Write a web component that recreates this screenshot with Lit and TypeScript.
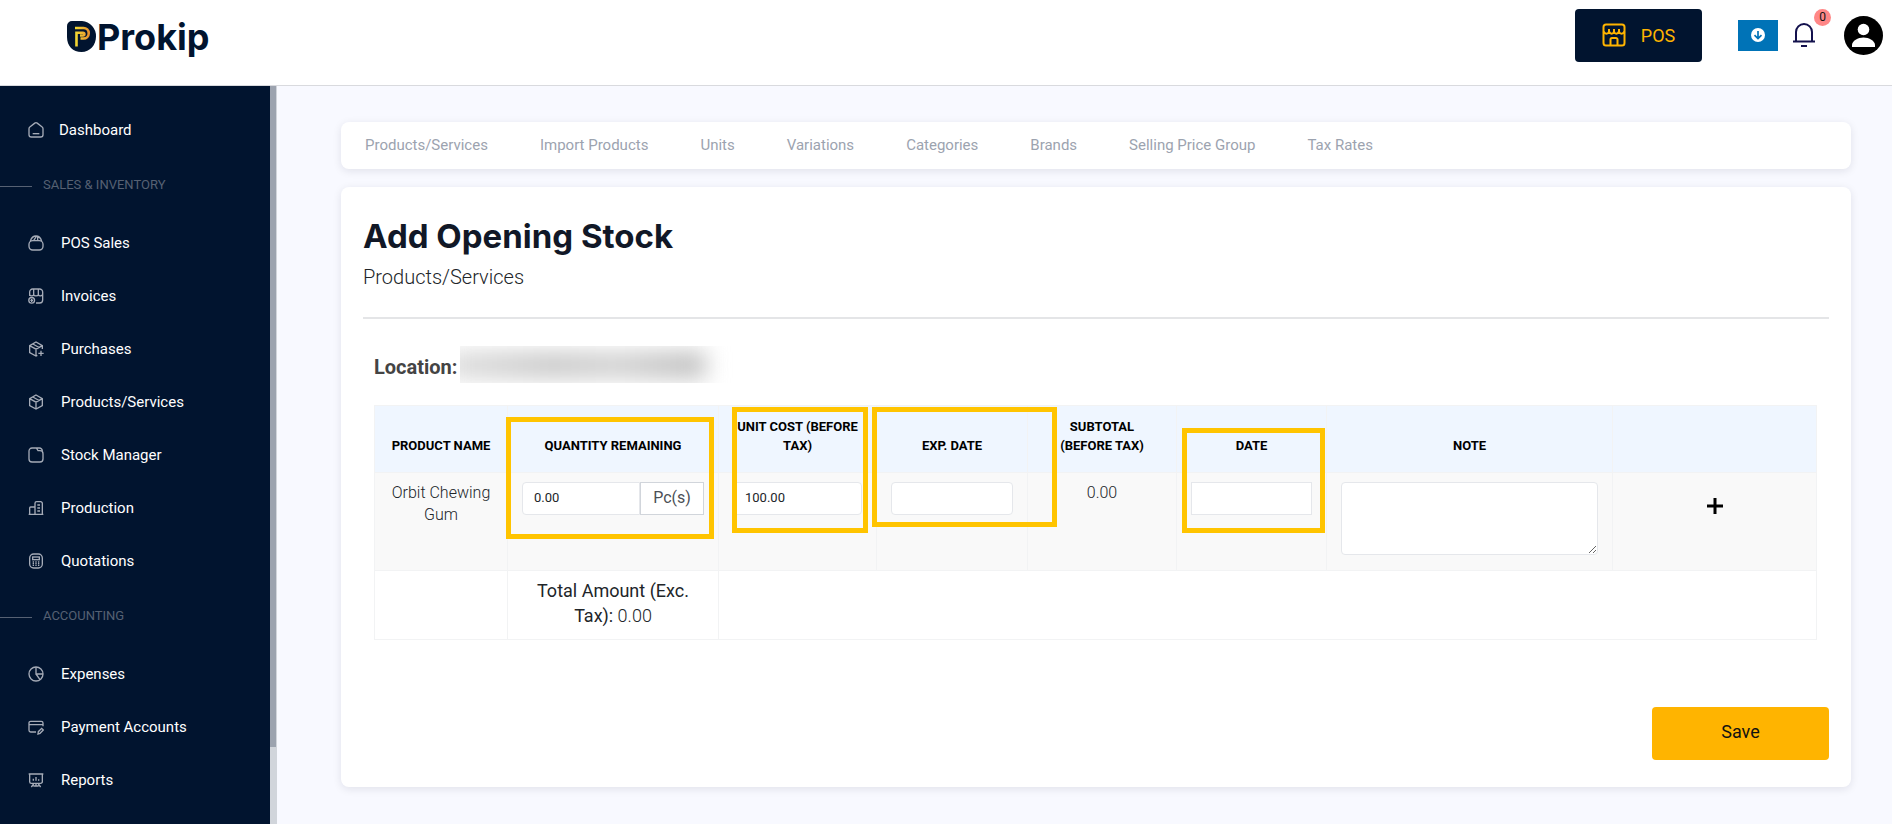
import { LitElement, html, css, svg, TemplateResult } from "lit";
import { customElement, property, state } from "lit/decorators.js";

const icons: Record<string, TemplateResult> = {
  home: svg`<path d="M1.500 10v9a3.500 3.500 0 0 0 3.500 3.500h14a3.500 3.500 0 0 0 3.500-3.500v-9a3 3 0 0 0-1.200-2.400L13.800 1.700a3 3 0 0 0-3.600 0L2.700 7.600A3 3 0 0 0 1.500 10z"/><path d="M7 17.500h10"/>`,
  bag: svg`<rect x="1.500" y="8.500" width="21" height="14" rx="5.500"/><path d="M3.500 9C5 4.500 8.500 1.500 12 1.500S19 4.500 20.500 9M8.500 8.500l4-6.500M14.500 8.500V2"/>`,
  shop: svg`<path d="M2.500 12V6A4.500 4.500 0 0 1 7 1.500h10A4.500 4.500 0 0 1 22 6v12a4.500 4.500 0 0 1-4.500 4.500H12M8.500 1.500V10M15.500 1.500V10M2.500 10c1 2.500 5 2.500 6 0 1 2.500 6 2.500 7 0 1 2.500 5 2.500 6 0"/><circle cx="5.500" cy="18.500" r="4.300"/><path d="M5.500 16v5M3.500 18.500h4"/>`,
  boxplus: svg`<path d="M21.500 12V7L12 1.500 2.500 7v10.500L12 22.500l2-1M2.500 7l9.500 5.200L21.500 7M12 12.200v10M7.200 4.500l9.500 5.300M19.500 14.500v8M15.500 18.500h8"/>`,
  box: svg`<path d="M12 1.500 21.500 7v10.500L12 22.500l-9.500-5V7zM2.500 7l9.500 5.200L21.500 7M12 12.200v10M7.200 4.500l9.500 5.300"/>`,
  folder: svg`<path d="M1.500 6a4.500 4.500 0 0 1 4.500-4.500h6.500L15 5.500h3a4.500 4.500 0 0 1 4.500 4.500v8a4.500 4.500 0 0 1-4.500 4.500H6A4.500 4.500 0 0 1 1.500 18zM12.500 1.500H17a4.500 4.500 0 0 1 4.500 5"/>`,
  building: svg`<path d="M1 21.500h22M2.500 21.500v-9.500a1.500 1.500 0 0 1 1.500-1.500h6.500M10.500 21.500V5A2.500 2.500 0 0 1 13 2.500h6A2.500 2.500 0 0 1 21.500 5v16.500M14 7.500h4M14 12h4M14 16.500h4"/>`,
  calc: svg`<rect x="2.500" y="1.500" width="19" height="21" rx="6"/><rect x="7" y="6" width="10" height="4"/><path d="M7 13.500h2M11 13.500h2M15 13.500h2M7 16h2M11 16h2M15 16h2M7 18.500h2M11 18.500h2M15 18.500h2"/>`,
  pie: svg`<circle cx="12" cy="12" r="10.500"/><path d="M12 1.500V12h10.500M12 12l6 8.500"/>`,
  card: svg`<path d="M12 19.500H4a2.500 2.500 0 0 1-2.500-2.500V6A2.500 2.500 0 0 1 4 3.500h16A2.500 2.500 0 0 1 22.500 6v5M1.500 8.500h21M15 22.500l.5-3.500 5-5 2.500 2.500-5 5z"/>`,
  board: svg`<path d="M1 3h22M2.500 3v11.500a2.500 2.500 0 0 0 2.500 2.500h14a2.500 2.500 0 0 0 2.500-2.500V3M8 10v3M12 7.500V13M16 11v2M12 17v5M8.500 18 5 22.500M15.500 18l3.500 4.500M8 21h8"/>`,
};

interface Entry { icon: string; text: string; }
interface Group { title?: string; entries: Entry[]; }

const groups: Group[] = [
  { entries: [{ icon: "home", text: "Dashboard" }] },
  {
    title: "SALES & INVENTORY",
    entries: [
      { icon: "bag", text: "POS Sales" },
      { icon: "shop", text: "Invoices" },
      { icon: "boxplus", text: "Purchases" },
      { icon: "box", text: "Products/Services" },
      { icon: "folder", text: "Stock Manager" },
      { icon: "building", text: "Production" },
      { icon: "calc", text: "Quotations" },
    ],
  },
  {
    title: "ACCOUNTING",
    entries: [
      { icon: "pie", text: "Expenses" },
      { icon: "card", text: "Payment Accounts" },
      { icon: "board", text: "Reports" },
    ],
  },
];

@customElement("top-bar")
export class TopBar extends LitElement {
  @property({ type: Number }) alerts = 0;

  static styles = css`
    :host { display: block; }
    .bar {
      display: flex; align-items: flex-start; justify-content: space-between;
      box-sizing: border-box; height: 86px; padding: 8px 9px 0 67px;
      background: #fff; border-bottom: 1px solid #d9dade;
    }
    .brand {
      display: flex; align-items: center; height: 56px;
      color: #01142f; text-decoration: none;
      font: 700 36px/44px Inter, sans-serif;
    }
    .name { padding-top: 2px; }
    .mark { width: 30px; height: 31px; }
    .tools { display: flex; align-items: center; height: 54px; }
    button { border: 0; padding: 0; background: none; font: inherit; cursor: pointer; }
    .pos {
      display: flex; align-items: center; justify-content: center; gap: 15px;
      width: 127px; height: 53px; margin-right: 36px; border-radius: 4px;
      background: #01142f; color: #ffb400; font-size: 18px;
    }
    .pos svg { width: 24px; height: 24px; }
    .load {
      display: grid; place-items: center; width: 40px; height: 31px;
      margin-right: 15px; background: #0073b7;
    }
    .bell { position: relative; width: 22px; height: 26px; margin-right: 29px; }
    .badge {
      position: absolute; left: 21px; top: -13px; width: 17px; height: 17px;
      border-radius: 50%; background: #ff8787; color: #111; font-size: 12px; line-height: 17px;
    }
    .user { width: 39px; height: 39px; }
    svg { display: block; }
  `;

  render() {
    return html`
      <header class="bar">
        <a class="brand" href="#" aria-label="Prokip">
          <svg class="mark" viewBox="0 0 30 31">
            <defs><linearGradient id="gold" gradientUnits="userSpaceOnUse" x1="8" y1="0" x2="22" y2="0"><stop offset="0" stop-color="#f2dc33" /><stop offset="1" stop-color="#e8922e" /></linearGradient></defs>
            <path d="M5 0h10a15 15 0 0 1 14 15.500C29 24 23 31 14.500 31S0 25 0 16V5a5 5 0 0 1 5-5z" fill="#01142f" />
            <path d="M8 7h8.500a5 5 0 0 1 0 10.500H13.500M9.500 25.500V11.700h6.500a1.300 1.300 0 0 1 0 2.800H13" fill="none" stroke="url(#gold)" stroke-width="2.600" />
          </svg>
          <span class="name">Prokip</span>
        </a>
        <div class="tools">
          <button class="pos">
            <svg viewBox="0 0 24 24" fill="none" stroke="currentColor" stroke-width="2">
              <rect x="1.500" y="1.500" width="21" height="21" rx="2.500" />
              <path d="M1.500 8.500c1.500 3 4.500 3 5.500 0v-2.500 2.500c1.500 3 4 3 5 0v-2.500 2.500c1 3 3.500 3 5 0v-2.500 2.500c1 3 4 3 5.500 0M8.500 22v-5.500a1.500 1.500 0 0 1 1.500-1.500h4a1.500 1.500 0 0 1 1.500 1.500V22" />
            </svg>
            POS
          </button>
          <button class="load" aria-label="Downloads">
            <svg width="14" height="14" viewBox="0 0 14 14"><circle cx="7" cy="7" r="7" fill="#fff" /><path d="M7 3v7.500M3.500 7.200 7 10.600l3.500-3.400" fill="none" stroke="#0073b7" stroke-width="1.700" /></svg>
          </button>
          <button class="bell" aria-label="Notifications">
            <svg width="22" height="26" viewBox="0 0 22 26" fill="none" stroke="#13114d" stroke-width="2"><path d="M0 19.500h22M3 19.500V10a8 8 0 0 1 16 0v9.500M8 24h6" /></svg>
            <span class="badge">${this.alerts}</span>
          </button>
          <button class="user" aria-label="Account">
            <svg viewBox="0 0 39 39"><circle cx="19.500" cy="19.500" r="19.500" /><circle cx="19.500" cy="13.500" r="5.800" fill="#fff" /><path d="M8 31v-2c0-4 6-7.500 11.500-7.500S31 25 31 29v2z" fill="#fff" /></svg>
          </button>
        </div>
      </header>
    `;
  }
}

@customElement("side-menu")
export class SideMenu extends LitElement {
  static styles = css`
    :host { display: flex; min-height: 0; background: #01142f; }
    nav { flex: 1; padding-top: 17px; overflow: hidden; }
    .entry {
      display: flex; align-items: center; gap: 17px; height: 53px; padding-left: 28px;
      color: #fff; font-size: 15px; line-height: 20px; text-decoration: none;
    }
    .top { gap: 15px; }
    svg { width: 16px; height: 16px; flex: none; fill: none; stroke: #a5abb7; stroke-width: 2; }
    h2 {
      display: flex; align-items: center; gap: 11px; height: 57px; margin: 0; padding-bottom: 3px;
      color: #566173; font-size: 13px; line-height: 18px; font-weight: 400;
    }
    h2::before { content: ""; width: 32px; height: 1px; margin-top: 3px; background: #566173; }
    .track { width: 7px; background: #d1d5db; }
    .thumb { width: 6px; height: calc(100% - 77px); background: #9ca3af; }
  `;

  render() {
    return html`
      <nav>
        ${groups.map((g) => html`
          ${g.title ? html`<h2>${g.title}</h2>` : null}
          ${g.entries.map((e) => html`
            <a class="entry ${g.title ? "" : "top"}" href="#">
              <svg viewBox="0 0 24 24">${icons[e.icon]}</svg>${e.text}
            </a>`)}
        `)}
      </nav>
      <div class="track"><div class="thumb"></div></div>
    `;
  }
}

@customElement("stock-table")
export class StockTable extends LitElement {
  @state() private quantity = "0.00";
  @state() private cost = "100.00";

  static styles = css`
    :host { display: block; position: relative; }
    table { width: 100%; table-layout: fixed; border-collapse: collapse; background: #fff; }
    th, td { border: 1px solid #f2f3f4; text-align: center; }
    th {
      height: 38px; padding: 11px 0 17px; vertical-align: bottom; background: #eff6ff;
      color: #000; font-size: 13px; line-height: 19px; font-weight: 700;
    }
    td { padding: 9px 14px; vertical-align: top; font-size: 16px; line-height: 22px; font-weight: 300; color: #212529; }
    .stock td { height: 79px; background: #f9f9f9; }
    .c1 { width: 133px; } .c2 { width: 211px; } .c3 { width: 158px; } .c4 { width: 151px; }
    .c5 { width: 149px; } .c6 { width: 150px; } .c7 { width: 286px; } .c8 { width: 204px; }
    input, textarea {
      display: block; box-sizing: border-box; width: 100%; height: 33px; padding: 0 11px 2px;
      border: 1px solid #e5e7eb; border-radius: 4px; background: #fff;
      color: #212529; font: 400 13px/20px Roboto, sans-serif;
    }
    textarea { height: 73px; resize: both; }
    .square { border-radius: 0; }
    .group { display: flex; }
    .group input { flex: 1; min-width: 0; border-radius: 4px 0 0 4px; }
    .unit {
      box-sizing: border-box; width: 64px; height: 33px; border: 1px solid #d1d5db;
      background: #fff; color: #4b4f56; font-weight: 400; line-height: 30px;
    }
    .add { margin-top: 16px; padding: 0; border: 0; background: none; cursor: pointer; }
    .add svg { display: block; }
    .total td { height: 50px; padding: 7px 14px 11px; font-size: 18px; line-height: 25px; }
    .total b { font-weight: 400; }
    .mark { position: absolute; box-sizing: border-box; border: 5px solid #ffc400; pointer-events: none; }
    .m1 { left: 132px; top: 12px; width: 208px; height: 122px; }
    .m2 { left: 358px; top: 2px; width: 136px; height: 126px; }
    .m3 { left: 498px; top: 2px; width: 185px; height: 120px; }
    .m4 { left: 808px; top: 23px; width: 143px; height: 105px; }
  `;

  render() {
    return html`
      <table>
        <colgroup>${[1, 2, 3, 4, 5, 6, 7, 8].map((n) => html`<col class="c${n}" />`)}</colgroup>
        <thead>
          <tr>
            <th>PRODUCT NAME</th>
            <th id="qty">QUANTITY REMAINING</th>
            <th id="cost">UNIT COST (BEFORE<br />TAX)</th>
            <th id="exp">EXP. DATE</th>
            <th>SUBTOTAL<br />(BEFORE TAX)</th>
            <th id="date">DATE</th>
            <th id="note">NOTE</th>
            <th></th>
          </tr>
        </thead>
        <tbody>
          <tr class="stock">
            <td>Orbit Chewing Gum</td>
            <td><div class="group"><input aria-labelledby="qty" .value=${this.quantity} /><span class="unit">Pc(s)</span></div></td>
            <td><input aria-labelledby="cost" .value=${this.cost} /></td>
            <td><input aria-labelledby="exp" /></td>
            <td>0.00</td>
            <td><input class="square" aria-labelledby="date" /></td>
            <td><textarea aria-labelledby="note"></textarea></td>
            <td>
              <button class="add" aria-label="Add row">
                <svg width="16" height="16" viewBox="0 0 16 16"><path d="M8 0v16M0 8h16" stroke="#000" stroke-width="3" /></svg>
              </button>
            </td>
          </tr>
          <tr class="total">
            <td></td>
            <td><b>Total Amount (Exc. Tax):</b> 0.00</td>
            <td colspan="6"></td>
          </tr>
        </tbody>
      </table>
      <div class="mark m1"></div>
      <div class="mark m2"></div>
      <div class="mark m3"></div>
      <div class="mark m4"></div>
    `;
  }
}

@customElement("app-root")
export class AppRoot extends LitElement {
  static styles = css`
    :host {
      display: flex; flex-direction: column; height: 100vh; overflow: hidden;
      background: #f8f9ff; font-family: Roboto, sans-serif;
    }
    .body { flex: 1; display: grid; grid-template-columns: 277px 1fr; min-height: 0; }
    main { display: flex; flex-direction: column; align-items: stretch; gap: 18px; padding: 36px 41px 36px 64px; }
    .card { border-radius: 8px; background: #fff; box-shadow: 0 2px 8px rgba(20, 24, 50, 0.1); }
    .tabs { display: flex; align-items: center; gap: 52px; height: 45px; padding: 0 24px 2px; }
    .tabs a { color: #9ca3af; font-size: 15px; line-height: 20px; text-decoration: none; }
    .panel { padding: 27px 22px; }
    h1 { margin: 0; color: #111827; font: 700 33px/44px Inter, sans-serif; }
    .sub { margin: 6px 0 0; padding-bottom: 27px; border-bottom: 2px solid #e4e5e7; color: #212529; font-size: 20px; line-height: 26px; font-weight: 300; }
    .inner { padding: 27px 12px 0 11px; }
    .place { display: flex; align-items: center; gap: 3px; margin-bottom: 22px; color: #444; font-size: 20px; font-weight: 700; }
    .label { padding-top: 4px; }
    .hidden { display: flex; align-items: center; width: 280px; height: 37px; overflow: hidden; }
    .smudge {
      flex: none; width: 258px; height: 26px; margin-left: -12px; filter: blur(11px);
      background: linear-gradient(90deg, #dcdcdc, #c8c8c8 40%, #d0d0d0 65%, #c0c0c0 92%);
    }
    .foot { display: flex; justify-content: flex-end; margin-top: 67px; }
    .save {
      width: 177px; height: 53px; padding: 0 0 3px; border: 0; border-radius: 4px; background: #ffb400;
      color: #111; font: 400 18px/24px Roboto, sans-serif; cursor: pointer;
    }
  `;

  render() {
    const tabs = ["Products/Services", "Import Products", "Units", "Variations", "Categories", "Brands", "Selling Price Group", "Tax Rates"];
    return html`
      <top-bar .alerts=${0}></top-bar>
      <div class="body">
        <side-menu></side-menu>
        <main>
          <nav class="card tabs">${tabs.map((t) => html`<a href="#">${t}</a>`)}</nav>
          <section class="card panel">
            <h1>Add Opening Stock</h1>
            <p class="sub">Products/Services</p>
            <div class="inner">
              <div class="place"><span class="label">Location:</span><span class="hidden"><span class="smudge"></span></span></div>
              <stock-table></stock-table>
            </div>
            <div class="foot"><button class="save">Save</button></div>
          </section>
        </main>
      </div>
    `;
  }
}
